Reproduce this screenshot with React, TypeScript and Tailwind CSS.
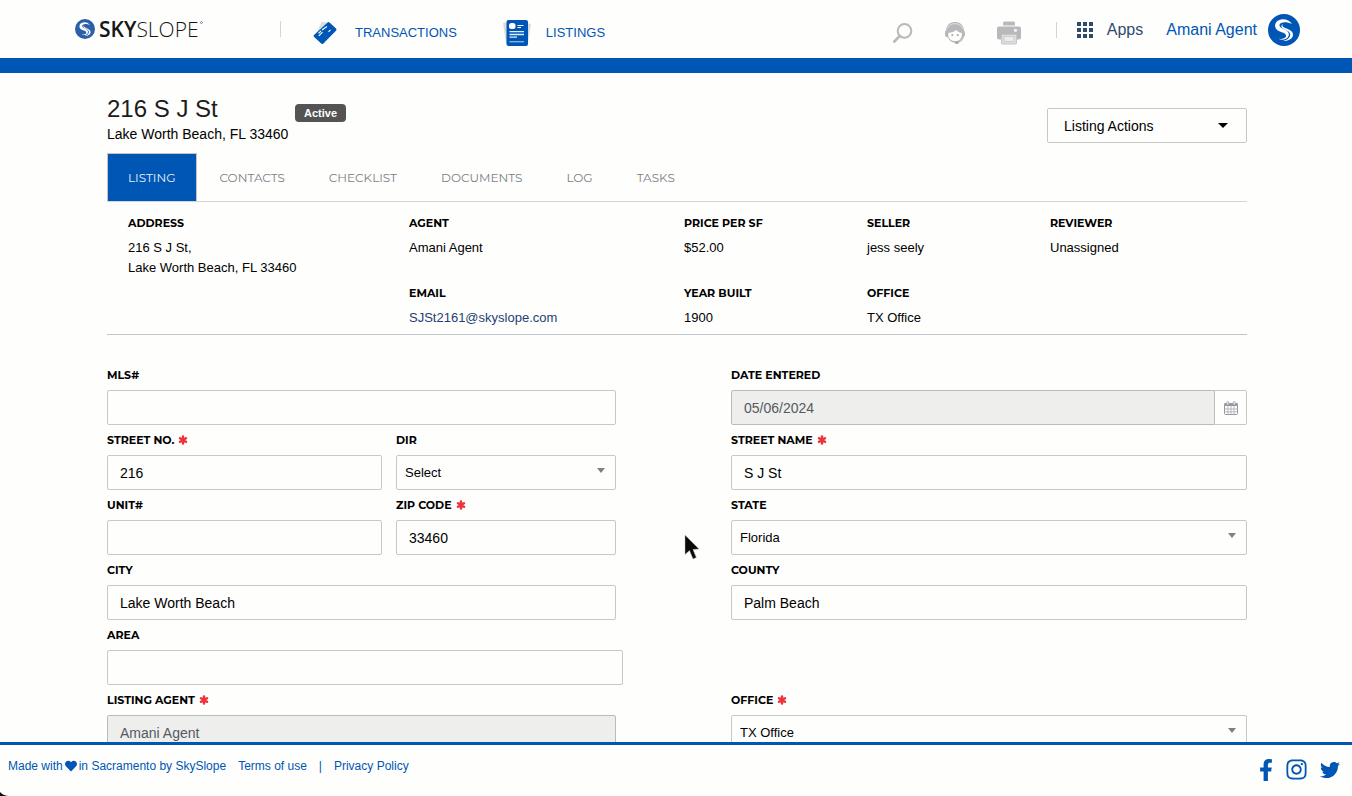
import type { ReactNode } from "react";
import { FaFacebookF, FaHeart, FaInstagram, FaTwitter } from "react-icons/fa";

function Swirl({ className, fill }: { className: string; fill: string }) {
  return (
    <svg viewBox="0 0 32 32" className={className} aria-hidden="true">
      <circle cx="16" cy="16" r="16" fill={fill} />
      <path
        fill="#fff"
        d="M24 10C22 7 18.500 5 14.500 5.200C10 5.400 7 8.400 7.100 11.800C7.200 15.400 10 16.900 13 18C16.500 19.200 18.300 20 18.100 22C17.900 24 15 25.200 10.500 24.800C15.500 27.200 20.700 24.600 20.900 20.600C21 17.800 18.500 16.300 15.500 15C12.600 13.700 11.200 12.600 11.500 10.800C12 8.300 17.500 6.800 24 10Z"
      />
      <path
        fill="#fff"
        d="M15 9.500C13.200 11.600 15 13.200 18.500 14.600C22.500 16.200 25.200 17.800 25 21C24.700 24.700 20 27.400 15 27C19.500 26 22.300 23.600 22.200 20.600C22.100 18 19.500 16.700 16.700 15.500C13 13.900 12.500 11.600 15 9.500Z"
      />
    </svg>
  );
}

function TicketIcon() {
  return (
    <svg viewBox="0 0 24 24" className="size-6" aria-hidden="true">
      <path d="M4.500 10L8.500 1L15 1.500L8 14Z" fill="#dcdcdc" />
      <path
        d="M14.600 1.600Q15.500 0.700 16.500 1.500L23 7.600Q23.900 8.500 23.200 9.500L10.400 22.400Q9.300 23.500 8.200 22.600L0.900 15.700Q0.200 14.800 1 13.900Z"
        fill="#0056b5"
      />
      <path
        d="M5.500 12.300L8 10M9 9L14 5.500M5.800 14.800L9.500 11.200M15.500 10.800L17.500 8.800"
        stroke="#fff"
        strokeWidth="1.100"
        fill="none"
      />
    </svg>
  );
}

function ListingsIcon() {
  return (
    <svg viewBox="0 0 28 28" className="size-7" aria-hidden="true">
      <path d="M0 4L5 3L6 24L3 24Z" fill="#dcdcdc" />
      <path d="M28 5L23 4L22 24L25 24Z" fill="#dcdcdc" />
      <rect x="3.500" y="1" width="21.500" height="26" rx="2" fill="#0056b5" />
      <rect x="6" y="4" width="6.500" height="6" rx="2.500" fill="#fff" />
      <path d="M14.500 6.500H20.500M14.500 8.500H18" stroke="#fff" strokeWidth="1.200" />
      <path d="M6.500 12.700H21M6.500 15.500H21M6.500 18.200H14" stroke="#e4edf8" strokeWidth="1.300" />
      <path d="M6.500 22.700H21" stroke="#8fb4df" strokeWidth="1.300" />
    </svg>
  );
}

function SearchIcon() {
  return (
    <svg viewBox="0 0 20 20" className="size-5" fill="none" stroke="#b9b9bb" aria-hidden="true">
      <circle cx="11.500" cy="7.900" r="6.800" strokeWidth="2" />
      <path d="M6.800 12.800L1.300 18.500" strokeWidth="2.600" strokeLinecap="round" />
    </svg>
  );
}

function SupportIcon() {
  return (
    <svg viewBox="0 0 20 23" className="h-6 w-5" aria-hidden="true">
      <path
        d="M1 9C1.500 3 5.500 0.500 10 0.500S18.500 3 19 9Q20 10 20 12V13.500Q20 15.500 18 15.500L16.500 18Q14 21 10 21Q5 21 3 16L1.500 15.500Q0 15 0 13.500V12Q0 10 1 9Z"
        fill="#b9b9bb"
      />
      <path d="M2.500 7C4.500 3 7 2.200 10 2.200S15.500 3 17.500 7" stroke="#e9e9e9" fill="none" strokeWidth="0.800" />
      <path
        d="M3.300 11.500Q8.500 11 11.500 8.500Q13 11.200 16.800 11.500V14.500Q15.500 19 12 19.500H9Q4.500 19 3.300 14.500Z"
        fill="#fefefd"
      />
      <circle cx="7.300" cy="13.500" r="1.100" fill="#a9a9ab" />
      <circle cx="12.700" cy="13.500" r="1.100" fill="#a9a9ab" />
      <path d="M18.500 14.500Q18 19.500 12 21" stroke="#b9b9bb" fill="none" strokeWidth="1.200" />
      <ellipse cx="11.800" cy="21" rx="2.200" ry="1.600" fill="#a9a9ab" />
    </svg>
  );
}

function PrinterIcon() {
  return (
    <svg viewBox="0 0 24 23" className="h-6 w-6" aria-hidden="true">
      <path d="M6 4V1.500Q6 0 7.500 0H16.500Q18 0 18 1.500V4Z" fill="#b9b9bb" />
      <rect x="0" y="5" width="24" height="13" rx="2" fill="#b9b9bb" />
      <circle cx="18.500" cy="8.800" r="1.600" fill="#f4f4f4" />
      <rect x="4.500" y="13" width="15" height="9.500" rx="1" fill="#dededf" stroke="#c4c4c6" />
      <rect x="7" y="15" width="10" height="5" fill="#ececec" stroke="#c9c9cb" strokeWidth="0.800" />
    </svg>
  );
}

function GridIcon() {
  return (
    <svg viewBox="0 0 16 16" className="size-4" fill="#2f4a6d" aria-hidden="true">
      {[0, 6, 12].map((y) => [0, 6, 12].map((x) => <rect key={`${x}-${y}`} x={x} y={y} width="4" height="4" />))}
    </svg>
  );
}

function CalendarIcon() {
  return (
    <svg viewBox="0 0 14 14" className="size-3.5" aria-hidden="true">
      <rect x="0.500" y="2.500" width="13" height="11" rx="1" fill="#fefefd" stroke="#97999f" />
      <rect x="0.500" y="2" width="13" height="3" fill="#97999f" />
      <path d="M4 5V13.500M7 5V13.500M10 5V13.500M1 8H13M1 10.800H13" stroke="#a9abb0" strokeWidth="0.800" />
      <rect x="2.800" y="0.500" width="2" height="3.500" rx="1" fill="#fefefd" stroke="#97999f" strokeWidth="0.800" />
      <rect x="9.200" y="0.500" width="2" height="3.500" rx="1" fill="#fefefd" stroke="#97999f" strokeWidth="0.800" />
    </svg>
  );
}

function RequiredMark() {
  return (
    <svg viewBox="0 0 10 10" className="size-2.5" role="img" aria-label="required">
      <path
        d="M5 1.500V8.500M2 3.200L8 6.800M8 3.200L2 6.800"
        stroke="#ee3338"
        strokeWidth="2.500"
        strokeLinecap="round"
      />
    </svg>
  );
}

function Divider({ className }: { className: string }) {
  return <span className={`h-4 w-px bg-[#d3d3d3] ${className}`} />;
}

const tabs = ["LISTING", "CONTACTS", "CHECKLIST", "DOCUMENTS", "LOG", "TASKS"];

function Detail({ label, className = "", children }: { label: string; className?: string; children: ReactNode }) {
  return (
    <div className={className}>
      <dt className="font-['Montserrat','Inter',sans-serif] text-[11px] leading-5 font-bold">{label}</dt>
      <dd className="mt-[5px] text-[13px] leading-5">{children}</dd>
    </div>
  );
}

function FieldLabel({ id, label, required }: { id: string; label: string; required?: boolean }) {
  return (
    <label
      htmlFor={id}
      className="mb-[5px] flex items-center gap-1 font-['Montserrat','Inter',sans-serif] text-[11px] leading-5 font-bold"
    >
      {label}
      {required && <RequiredMark />}
    </label>
  );
}

type FieldProps = { id: string; label: string; value?: string; required?: boolean; className?: string };

function TextField({ id, label, value = "", required, className = "", disabled }: FieldProps & { disabled?: boolean }) {
  return (
    <div className={className}>
      <FieldLabel id={id} label={label} required={required} />
      <input
        id={id}
        type="text"
        defaultValue={value}
        disabled={disabled}
        className="h-[35px] w-full rounded-xs border border-[#c8c8c8] px-3 text-sm disabled:border-[#bbb] disabled:bg-[#eeeeed] disabled:text-[#555a60]"
      />
    </div>
  );
}

function SelectField({ id, label, value, required, className = "" }: FieldProps) {
  return (
    <div className={className}>
      <FieldLabel id={id} label={label} required={required} />
      <div className="relative">
        <select
          id={id}
          className="h-[35px] w-full appearance-none rounded-xs border border-[#c8c8c8] pr-7 pl-2 text-[13px]"
        >
          <option>{value}</option>
        </select>
        <svg viewBox="0 0 8 5" className="pointer-events-none absolute top-[13px] right-[11px] h-[5px] w-2" aria-hidden="true">
          <path d="M0 0H8L4 5Z" fill="#808080" />
        </svg>
      </div>
    </div>
  );
}

export default function App() {
  return (
    <div className="relative flex h-screen flex-col overflow-hidden bg-[#fefefd] font-['Liberation_Sans',Arial,sans-serif] text-black">
      <header className="flex h-[73px] shrink-0 items-center border-b-[15px] border-[#0056b5] pr-[52px] pl-[75px]">
        <a href="#home" className="flex w-32 items-center gap-1 text-[#161616]" aria-label="SkySlope">
          <Swirl className="size-5 shrink-0" fill="#2b5fa8" />
          <span className="font-['Open_Sans',sans-serif] text-[21px] leading-6 whitespace-nowrap">
            <span className="font-semibold">SKY</span>
            <span className="font-light">SLOPE</span>
          </span>
          <span className="-ml-[3px] mt-1 size-[3px] shrink-0 self-start rounded-full border border-[#888]" />
        </a>
        <Divider className="ml-[77px]" />
        <nav className="ml-8 flex items-center gap-[46px] pt-2 text-[13px] text-[#0056b5]">
          <a href="#transactions" className="flex items-center gap-[18px]">
            <TicketIcon />
            TRANSACTIONS
          </a>
          <a href="#listings" className="flex items-center gap-[15px]">
            <ListingsIcon />
            LISTINGS
          </a>
        </nav>
        <div className="ml-auto flex items-center gap-8 pt-2">
          <button type="button" aria-label="Search">
            <SearchIcon />
          </button>
          <button type="button" aria-label="Support">
            <SupportIcon />
          </button>
          <button type="button" aria-label="Print">
            <PrinterIcon />
          </button>
        </div>
        <div className="ml-[35px] flex items-center pt-0.5">
          <Divider className="" />
          <button type="button" className="ml-5 flex items-center gap-[14px] text-base text-[#2f4a6d]">
            <GridIcon />
            Apps
          </button>
          <a href="#profile" className="ml-[23px] flex items-center gap-[11px] text-base text-[#0056b5]">
            Amani Agent
            <Swirl className="size-8" fill="#0056b5" />
          </a>
        </div>
      </header>

      <main className="min-h-0 flex-1 overflow-y-auto pl-0.5 [scrollbar-width:none]">
        <div className="mx-auto max-w-[1140px]">
          <div className="flex items-start justify-between pt-[21px]">
            <div className="relative">
              <h1 className="text-2xl leading-[30px] text-[#1c1c1c]">216 S J St</h1>
              <p className="text-sm leading-5">Lake Worth Beach, FL 33460</p>
              <span className="absolute top-2.5 left-[188px] rounded-sm bg-[#545454] px-[9px] text-[11px] leading-[18px] font-bold text-white">
                Active
              </span>
            </div>
            <button
              type="button"
              className="mt-3.5 flex h-[35px] w-[200px] items-center justify-between rounded-xs border border-[#c8c8c8] pr-[18px] pl-4 text-sm"
            >
              Listing Actions
              <svg viewBox="0 0 10 5" className="h-[5px] w-2.5" aria-hidden="true">
                <path d="M0 0H10L5 5Z" />
              </svg>
            </button>
          </div>

          <nav className="mt-[9px] flex h-[49px] gap-0.5 border-b border-[#d5d5d8] font-['Montserrat','Inter',sans-serif] text-xs text-[#7c8085]">
            {tabs.map((tab) => (
              <a
                key={tab}
                href={`#${tab.toLowerCase()}`}
                aria-current={tab === "LISTING" ? "page" : undefined}
                className="flex items-center border border-b-0 border-transparent px-5 aria-[current=page]:border-[#c4c4c4] aria-[current=page]:bg-[#0056b5] aria-[current=page]:text-[#e6eef8]"
              >
                {tab}
              </a>
            ))}
          </nav>

          <dl className="grid grid-cols-[281fr_275fr_183fr_183fr_197fr] gap-y-[5px] border-b border-[#c4c5cc] pt-[11px] pb-1.5 pl-[21px]">
            <Detail label="ADDRESS" className="row-span-2">
              216 S J St,
              <br />
              Lake Worth Beach, FL 33460
            </Detail>
            <Detail label="AGENT" className="pb-5">Amani Agent</Detail>
            <Detail label="PRICE PER SF">$52.00</Detail>
            <Detail label="SELLER">jess seely</Detail>
            <Detail label="REVIEWER">Unassigned</Detail>
            <Detail label="EMAIL">
              <a href="mailto:SJSt2161@skyslope.com" className="text-[#1d3f75]">
                SJSt2161@skyslope.com
              </a>
            </Detail>
            <Detail label="YEAR BUILT">1900</Detail>
            <Detail label="OFFICE">TX Office</Detail>
          </dl>

          <form className="grid grid-cols-2 gap-x-[108px] gap-y-[5px] pt-[30px] pb-10">
            <TextField id="mls" label="MLS#" className="pr-[7px]" />
            <div>
              <FieldLabel id="date-entered" label="DATE ENTERED" />
              <div className="flex h-[35px]">
                <input
                  id="date-entered"
                  type="text"
                  defaultValue="05/06/2024"
                  disabled
                  className="min-w-0 flex-1 rounded-l-xs border border-[#bbb] bg-[#eeeeed] px-3 text-sm text-[#555a60]"
                />
                <button
                  type="button"
                  aria-label="Choose date"
                  className="flex w-8 items-center justify-center rounded-r-xs border border-l-0 border-[#c8c8c8]"
                >
                  <CalendarIcon />
                </button>
              </div>
            </div>
            <div className="grid grid-cols-[275fr_220fr] gap-x-3.5 pr-[7px]">
              <TextField id="street-no" label="STREET NO." value="216" required />
              <SelectField id="dir" label="DIR" value="Select" />
            </div>
            <TextField id="street-name" label="STREET NAME" value="S J St" required />
            <div className="grid grid-cols-[275fr_220fr] gap-x-3.5 pr-[7px]">
              <TextField id="unit" label="UNIT#" />
              <TextField id="zip" label="ZIP CODE" value="33460" required />
            </div>
            <SelectField id="state" label="STATE" value="Florida" />
            <TextField id="city" label="CITY" value="Lake Worth Beach" className="pr-[7px]" />
            <TextField id="county" label="COUNTY" value="Palm Beach" />
            <TextField id="area" label="AREA" className="col-start-1" />
            <TextField
              id="listing-agent"
              label="LISTING AGENT"
              value="Amani Agent"
              required
              disabled
              className="col-start-1 pr-[7px]"
            />
            <SelectField id="office" label="OFFICE" value="TX Office" required />
          </form>
        </div>
      </main>

      <footer className="flex h-[54px] shrink-0 items-start justify-between border-t-[3px] border-[#0056b5] pr-3 pl-2 text-[#0056b5]">
        <div className="flex items-center gap-3 pt-[9px] text-xs leading-6">
          <span className="flex items-center gap-0.5">
            Made with
            <FaHeart className="size-3" aria-label="love" />
            in Sacramento by SkySlope
          </span>
          <a href="#terms">Terms of use</a>
          <span>|</span>
          <a href="#privacy">Privacy Policy</a>
        </div>
        <div className="flex items-center gap-3 pt-[13px]">
          <a href="#facebook" aria-label="Facebook">
            <FaFacebookF className="h-[22px] w-3.5" />
          </a>
          <a href="#instagram" aria-label="Instagram">
            <FaInstagram className="size-[23px]" />
          </a>
          <a href="#twitter" aria-label="Twitter">
            <FaTwitter className="size-5" />
          </a>
        </div>
      </footer>

      <svg viewBox="0 0 16 27" className="pointer-events-none absolute top-[534px] left-[684px] h-[27px] w-4" aria-hidden="true">
        <path d="M1 1V20.500L5.500 16.500L9 25L12.300 23.500L9 15.500L15 15Z" fill="#0a0a0a" stroke="#bbb" strokeWidth="0.500" />
      </svg>
      <svg viewBox="0 0 8 4" className="pointer-events-none absolute bottom-0 left-0 h-1 w-2" aria-hidden="true">
        <path d="M0 0Q3 3.500 8 4H0Z" fill="#111" />
      </svg>
    </div>
  );
}
